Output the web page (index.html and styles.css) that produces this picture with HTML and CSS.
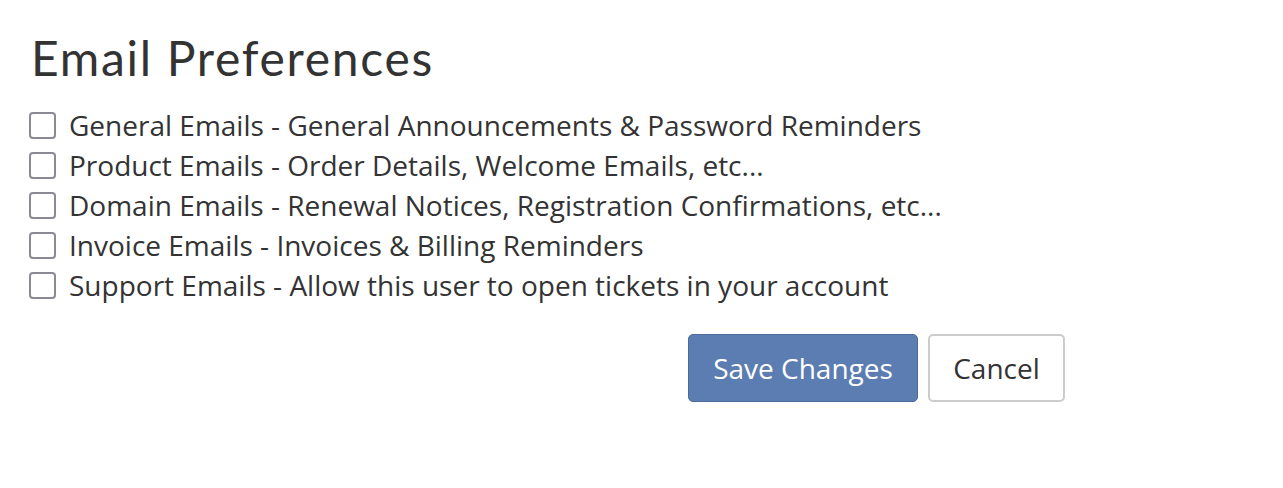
FILE: index.html
```html
<!DOCTYPE html>
<html>
<head>
<meta charset="utf-8">
<link rel="stylesheet" href="styles.css">
</head>
<body>
<div class="page">
  <h1 class="title">Email Preferences</h1>
  <div class="options">
    <label class="option"><span class="box"></span><span>General Emails - General Announcements &amp; Password Reminders</span></label>
    <label class="option"><span class="box"></span><span>Product Emails - Order Details, Welcome Emails, etc...</span></label>
    <label class="option"><span class="box"></span><span>Domain Emails - Renewal Notices, Registration Confirmations, etc...</span></label>
    <label class="option"><span class="box"></span><span>Invoice Emails - Invoices &amp; Billing Reminders</span></label>
    <label class="option"><span class="box"></span><span>Support Emails - Allow this user to open tickets in your account</span></label>
  </div>
  <div class="actions">
    <button class="btn btn-primary">Save Changes</button>
    <button class="btn btn-default">Cancel</button>
  </div>
</div>
</body>
</html>
```
FILE: styles.css
```css
html, body {
  margin: 0;
  padding: 0;
  background: #ffffff;
}
.page {
  padding: 26px 29px 0 29px;
  font-family: "Open Sans", "Liberation Sans", sans-serif;
  color: #333333;
}
.title {
  margin: 0 0 15px 2px;
  font-family: "Lato", "Open Sans", sans-serif;
  font-weight: 400;
  font-size: 48px;
  line-height: 64px;
  color: #333333;
  letter-spacing: 1.7px;
}
.options {
  display: flex;
  flex-direction: column;
}
.option {
  display: flex;
  align-items: center;
  height: 40px;
  font-size: 28px;
  gap: 13px;
}
.box {
  width: 23px;
  height: 23px;
  border: 2px solid #8a8a94;
  border-radius: 4px;
  flex: none;
}
.actions {
  display: flex;
  gap: 10px;
  margin-top: 29px;
  padding-left: 659px;
}
.btn {
  font-family: "Open Sans", "Liberation Sans", sans-serif;
  font-size: 28px;
  height: 68px;
  border-radius: 5px;
  padding: 0;
  cursor: pointer;
}
.btn-primary {
  background: #5b7db1;
  border: 1px solid #4c6a9c;
  color: #ffffff;
  width: 230px;
}
.btn-default {
  background: #ffffff;
  border: 2px solid #cccccc;
  color: #333333;
  width: 137px;
}
```
